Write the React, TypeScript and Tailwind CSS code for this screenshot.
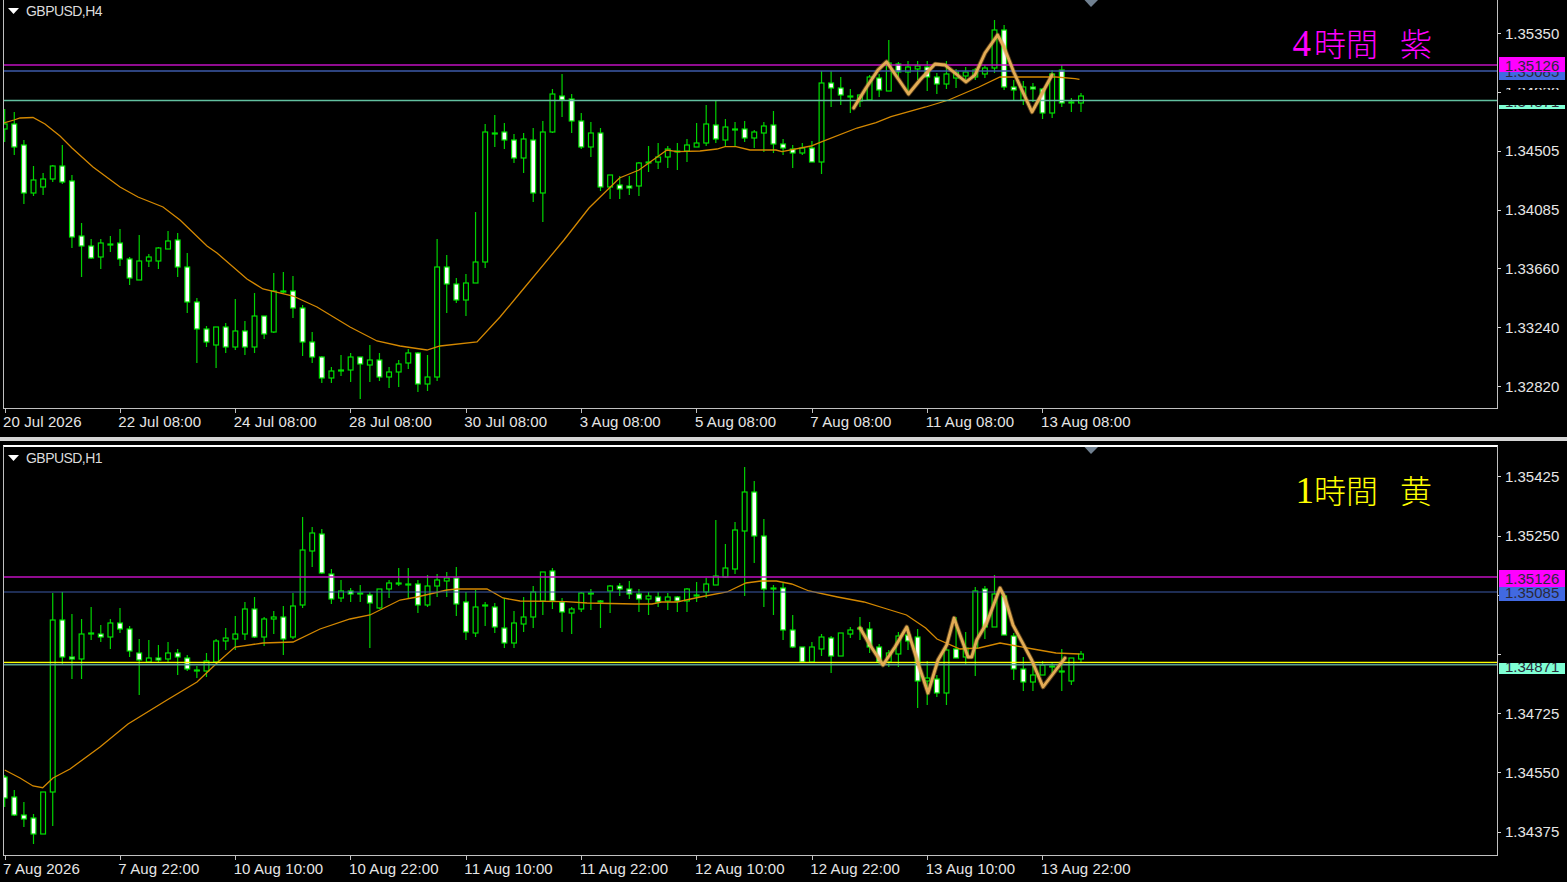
type Candle = [number, number, number, number, number]

const X0 = 4.67
const STEP = 9.61

// hi, body top, body bottom, lo, white body
const h4Candles: Candle[] = [
  [109,124,129,142,0],[112,124,147,155,1],[140,145,193,204,1],[166,180,193,196,0],[173,179,187,195,0],
  [165,166,179,182,0],[145,166,182,184,1],[175,181,237,248,1],[223,236,246,277,1],[239,246,258,259,1],
  [239,243,257,269,0],[236,244,245,252,1],[229,243,259,266,1],[257,259,278,285,1],[235,261,280,280,0],
  [254,257,261,267,0],[247,248,261,269,0],[231,241,249,249,0],[233,240,267,277,1],[253,267,302,313,1],
  [298,302,329,363,1],[326,329,342,347,1],[327,327,345,368,0],[323,327,347,353,1],[299,331,347,350,0],
  [321,331,347,355,1],[293,316,347,353,0],[316,316,334,339,1],[273,291,332,333,0],[272,291,292,293,1],
  [276,291,308,318,1],[305,308,342,356,1],[332,342,357,363,1],[356,357,378,383,1],[367,371,378,383,0],
  [355,370,371,376,1],[353,357,370,382,0],[357,357,364,399,1],[345,360,365,382,0],[353,360,377,381,1],
  [367,372,377,388,0],[360,364,372,387,0],[349,353,363,369,0],[352,353,384,392,1],[355,377,384,391,0],
  [239,267,377,381,0],[255,267,284,313,1],[278,284,300,303,1],[274,283,300,316,0],[212,262,283,283,0],
  [124,132,262,268,0],[115,133,134,147,1],[123,132,140,149,1],[134,140,158,163,1],[133,139,158,173,0],
  [128,140,193,202,1],[121,132,193,222,0],[89,94,132,133,0],[74,96,100,117,1],[94,99,121,133,1],
  [113,121,147,149,1],[122,133,147,157,0],[128,133,187,191,1],[175,175,187,199,0],[176,185,189,199,1],
  [176,186,188,195,1],[162,163,186,196,0],[146,162,163,172,1],[143,157,162,169,0],[146,149,157,168,0],
  [143,151,152,170,1],[139,145,151,162,0],[123,143,147,147,0],[105,124,143,146,0],[101,125,139,143,1],
  [119,127,140,146,0],[122,129,130,146,1],[121,129,138,142,1],[130,132,138,148,0],[122,126,133,152,0],
  [111,125,144,153,1],[139,144,148,155,1],[145,149,153,168,1],[143,148,153,155,0],[141,148,162,162,1],
  [71,83,162,174,0],[71,83,88,107,1],[77,88,95,105,1],[89,96,97,113,1],[95,95,101,107,0],
  [75,77,100,101,0],[74,78,90,97,1],[40,63,91,91,0],[62,64,72,77,1],[61,67,72,95,0],
  [61,66,69,80,0],[61,67,77,91,1],[73,77,84,94,1],[61,74,84,89,0],[69,72,78,88,0],
  [67,72,76,82,0],[68,70,77,80,0],[65,68,74,78,0],[20,30,68,73,0],[25,30,87,90,1],
  [80,87,90,100,1],[81,87,100,105,0],[83,87,89,102,1],[88,89,113,119,1],[70,74,113,118,0],
  [65,70,103,107,1],[98,102,103,112,1],[93,96,103,112,0],
]

const h1Candles: Candle[] = [
  [775,777,798,807,1],[790,797,815,816,1],[802,815,819,827,1],[814,818,834,844,1],[792,792,834,834,0],
  [593,620,792,826,0],[592,620,657,665,1],[614,657,659,679,1],[619,634,659,679,0],[607,633,634,640,1],
  [625,634,637,642,1],[619,623,637,649,0],[608,623,629,633,1],[626,629,651,657,1],[639,653,660,695,1],
  [640,658,662,662,0],[645,658,660,662,1],[642,653,659,662,0],[649,653,657,675,1],[655,658,669,671,1],
  [666,670,671,678,1],[653,661,671,677,0],[639,641,662,663,0],[628,638,641,650,0],[616,634,639,650,0],
  [602,609,634,640,0],[597,609,637,638,1],[617,619,637,646,0],[611,617,619,634,0],[606,617,639,655,1],
  [593,606,637,639,0],[517,550,605,608,0],[527,533,551,567,0],[529,534,573,574,1],[569,574,599,604,1],
  [580,591,598,602,0],[588,591,594,602,1],[585,593,594,602,1],[592,595,603,648,1],[589,589,608,609,0],
  [580,583,589,598,0],[568,583,584,586,1],[568,584,585,598,1],[580,584,605,613,1],[575,586,605,607,0],
  [574,580,586,597,0],[572,578,581,597,0],[567,578,604,616,1],[592,602,632,640,1],[590,607,633,637,0],
  [602,605,606,626,1],[603,607,627,633,1],[598,628,643,648,1],[611,623,643,648,0],[597,617,624,632,0],
  [586,592,617,628,0],[572,572,601,615,0],[568,571,601,609,1],[598,602,612,632,1],[607,609,613,634,0],
  [592,593,609,612,0],[589,593,594,610,1],[600,601,602,628,1],[585,586,591,613,0],[583,586,589,596,1],
  [581,589,594,599,1],[589,594,599,612,1],[592,596,599,615,0],[592,597,602,607,1],[593,597,601,610,0],
  [596,597,601,612,1],[588,589,601,612,0],[582,595,596,602,1],[578,584,592,598,0],[520,576,585,585,0],
  [544,568,577,578,0],[522,530,569,574,0],[467,492,531,596,0],[481,492,536,563,1],[519,536,589,607,1],
  [585,588,589,615,1],[583,588,630,640,1],[615,630,647,648,1],[647,647,662,662,1],[642,647,662,662,0],
  [634,637,649,656,0],[636,638,656,673,1],[633,633,656,656,0],[627,630,634,638,0],[617,628,629,640,1],
  [622,629,647,653,1],[644,647,662,665,1],[650,653,662,667,0],[632,636,654,667,0],[627,635,641,650,1],
  [629,637,681,708,1],[661,678,681,705,0],[675,679,693,697,1],[645,650,693,705,0],[617,649,658,658,1],
  [632,648,657,664,0],[587,591,648,676,0],[586,589,627,639,1],[575,594,627,627,0],[593,596,635,635,1],
  [633,636,669,680,1],[657,669,682,691,1],[663,675,682,691,0],[661,665,675,675,0],[663,666,667,673,1],
  [649,671,672,691,1],[658,658,681,685,0],[651,654,659,662,0],
]

const h4Ma = '4,123 14,120 20,118 33,117.5 45,124 60,136 72,148 93,167 120,187 138,197 163,207 180,220 207,246 217,253 247,279 263,289 293,296 317,307 350,327 377,341 400,346 427,350 440,346 477,342 500,317 520,293 564,240 589,208 619.5,178 639,170 667,150 677,151.7 700,151 717,149 725,146.7 736,146.7 750,150 776,150 782,151.7 811,146 822,141.7 857,128 876,122.7 891,116.7 925.7,107 948.6,100 979,87 1000,77 1036.6,77 1056,77 1075,78.7 1079.5,79.3'
const h1Ma = '4.7,770 20,778 33,786 42.7,787.7 53,778 70,769 100,747 128,724 167,700 197,682 217,663 235,647 263,643 293,642 320,629 350,619 370,615 400,600 417,597 447,590 457,589 487,589 503,598 520,601 566,601.7 587,603 635,604 652,604 661.6,602 677,602 700,597 727,592 746,583 761,581 776.4,581 791.7,584 809,591 837.6,597 864,602 887,609 906.5,615 925.7,628 937,639 960,649 979,648 1000,643 1033,649 1056,653 1079.5,654'
const h4Trend = '853.7,108 866,88 878,70 886.6,61.7 899,80 908.5,94 920,80 935,64 945,65 966,82 975,75 985,53 997.6,35 1004,47 1013.7,72 1032,112 1052,75'
const h1Trend = '860,628 870,645 883,665 895,647 906.7,627 918,663 928,693 938,660 946.7,645 954,618 968,657 971.7,657 976.7,640 986.7,623 1000,588 1005,598 1013,625 1031.7,660 1043,687 1065,658'

interface HLine {
  y: number
  color: string
  width: number
}

const h4Lines: HLine[] = [
  { y: 65, color: '#c010c0', width: 1.5 },
  { y: 71, color: '#3c5aa8', width: 1.5 },
  { y: 100.6, color: '#62c0a0', width: 1.5 },
]

const h1Lines: HLine[] = [
  { y: 577, color: '#c010c0', width: 1.3 },
  { y: 592, color: '#3c5aa8', width: 1.1 },
  { y: 664.7, color: '#5aa090', width: 1.8 },
  { y: 662.4, color: '#ffff00', width: 1.3 },
]

function Candles({ data }: { data: Candle[] }) {
  return (
    <g>
      {data.map(([hi, top, bot, lo, white], i) => {
        const x = X0 + STEP * i
        return (
          <g key={i}>
            <line x1={x} x2={x} y1={hi} y2={lo} stroke="#00d200" strokeWidth={1.2} />
            <rect
              x={x - 2.4}
              y={top}
              width={4.8}
              height={Math.max(bot - top, 1)}
              fill={white ? '#ffffff' : '#000000'}
              stroke="#00e000"
              strokeWidth={1.2}
            />
          </g>
        )
      })}
    </g>
  )
}

interface ChartProps {
  top: number
  data: Candle[]
  ma: string
  trend: string
  lines: HLine[]
}

function Chart({ top, data, ma, trend, lines }: ChartProps) {
  return (
    <svg viewBox={`4 ${top} 1493 408`} className="block h-[408px] w-[1493px]">
      <Candles data={data} />
      <polyline points={ma} fill="none" stroke="#d48800" strokeWidth={1.3} />
      {lines.map((l) => (
        <line key={l.y} x1={4} x2={1497} y1={l.y} y2={l.y} stroke={l.color} strokeWidth={l.width} />
      ))}
      <polyline points={trend} fill="none" stroke="#c98f3a" strokeOpacity={0.45} strokeWidth={4.6} strokeLinejoin="round" strokeLinecap="round" />
      <polyline points={trend} fill="none" stroke="#e3ac55" strokeWidth={2.8} strokeLinejoin="round" strokeLinecap="round" />
      <polygon points={`1084.5,${top} 1098,${top} 1091,${top + 7}`} fill="#708090" />
    </svg>
  )
}

interface Tag {
  price: string
  bg: string
  color: string
  top: number
  height: number
  textOffset: number
}

interface PriceAxisProps {
  className: string
  rowClass: string
  prices: (string | null)[]
  tags: Tag[]
}

function PriceAxis({ className, rowClass, prices, tags }: PriceAxisProps) {
  return (
    <div className={`relative h-[409px] w-[69px] text-[15px] leading-[16px] text-[#e6e6e6] ${className}`}>
      {prices.map((p, i) => (
        <div key={i} className={`flex items-center ${rowClass}`}>
          <span className="h-px w-[3px] bg-[#d8d8d8]" />
          {p && <span className="ml-[4px]">{p}</span>}
        </div>
      ))}
      {tags.map((t) => (
        <div
          key={t.top}
          className="absolute left-px w-[66px] overflow-hidden pl-[6px]"
          style={{ top: t.top, height: t.height, background: t.bg, color: t.color }}
        >
          <div style={{ marginTop: t.textOffset }}>{t.price}</div>
        </div>
      ))}
    </div>
  )
}

function TimeAxis({ labels }: { labels: string[] }) {
  return (
    <div className="ml-[3px] flex text-[15px] leading-[16px] tracking-[0.1px] text-[#e6e6e6]">
      {labels.map((t) => (
        <div key={t} className="w-[115.33px] shrink-0">
          <div className="ml-[1.5px] h-[4px] w-px bg-[#c0c0c0]" />
          <div className="mt-px whitespace-nowrap">{t}</div>
        </div>
      ))}
    </div>
  )
}

function ChartLabel({ symbol }: { symbol: string }) {
  return (
    <div className="absolute left-[4px] top-[3px] flex items-center text-[14px] leading-[16px] tracking-[-0.55px] text-[#dcdcdc]">
      <svg width="11" height="6" viewBox="0 0 11 6" className="mr-[7px]">
        <polygon points="0,0 11,0 5.5,6" fill="#ffffff" />
      </svg>
      {symbol}
    </div>
  )
}

interface CaptionProps {
  digit: string
  digitClass: string
  first: string
  second: string
  color: string
}

function Caption({ digit, digitClass, first, second, color }: CaptionProps) {
  return (
    <div
      className={`absolute right-[65px] top-[22px] whitespace-nowrap font-['Liberation_Serif','Noto_Sans_CJK_JP',serif] text-[32px] font-light leading-[46px] ${color}`}
    >
      <span className={`text-[37px] leading-none ${digitClass}`}>{digit}</span>
      {first}
      <span className="ml-[22px]">{second}</span>
    </div>
  )
}

export default function App() {
  return (
    <div className="flex h-[882px] w-[1567px] flex-col overflow-hidden bg-black font-['Liberation_Sans',sans-serif]">
      {/* H4 */}
      <div className="h-[437px]">
        <div className="flex">
          <div className="relative ml-[3px] w-[1495px] border-x border-b border-[#c0c0c0]">
            <Chart top={0} data={h4Candles} ma={h4Ma} trend={h4Trend} lines={h4Lines} />
            <ChartLabel symbol="GBPUSD,H4" />
            <Caption digit="4" digitClass="mr-[3px]" first="時間" second="紫" color="text-[#ff00ff]" />
          </div>
          <PriceAxis
            className="pt-[4.4px]"
            rowClass="h-[58.8px]"
            prices={['1.35350', null, '1.34505', '1.34085', '1.33660', '1.33240', '1.32820']}
            tags={[
              { price: '1.35085', bg: '#4169e1', color: '#2a2a3a', top: 72, height: 8, textOffset: -8 },
              { price: '1.35126', bg: '#ff00ff', color: '#2a2a3a', top: 57, height: 15, textOffset: 1 },
              { price: '1.34930', bg: '#000000', color: '#e6e6e6', top: 88, height: 2, textOffset: -4 },
              { price: '1.34871', bg: '#7fffd4', color: '#2a2a3a', top: 105, height: 4, textOffset: -11 },
            ]}
          />
        </div>
        <TimeAxis
          labels={[
            '20 Jul 2026',
            '22 Jul 08:00',
            '24 Jul 08:00',
            '28 Jul 08:00',
            '30 Jul 08:00',
            '3 Aug 08:00',
            '5 Aug 08:00',
            '7 Aug 08:00',
            '11 Aug 08:00',
            '13 Aug 08:00',
          ]}
        />
      </div>

      <div className="h-[4px] bg-[#d4d4d4]" />

      {/* H1 */}
      <div className="flex-1 pt-[4px]">
        <div className="flex">
          <div className="relative ml-[3px] w-[1495px] border-x border-b border-t-2 border-[#c0c0c0] border-t-white">
            <Chart top={447} data={h1Candles} ma={h1Ma} trend={h1Trend} lines={h1Lines} />
            <ChartLabel symbol="GBPUSD,H1" />
            <Caption digit="1" digitClass="mr-0" first="時間" second="黄" color="text-[#ffff00]" />
          </div>
          <PriceAxis
            className="pt-[2.4px]"
            rowClass="h-[59.2px]"
            prices={['1.35425', '1.35250', null, null, '1.34725', '1.34550', '1.34375']}
            tags={[
              { price: '1.35085', bg: '#4169e1', color: '#2a2a3a', top: 142, height: 14, textOffset: -2 },
              { price: '1.35126', bg: '#ff00ff', color: '#2a2a3a', top: 125, height: 17, textOffset: 1 },
              { price: '1.34871', bg: '#7fffd4', color: '#2a2a3a', top: 218, height: 11, textOffset: -4 },
            ]}
          />
        </div>
        <TimeAxis
          labels={[
            '7 Aug 2026',
            '7 Aug 22:00',
            '10 Aug 10:00',
            '10 Aug 22:00',
            '11 Aug 10:00',
            '11 Aug 22:00',
            '12 Aug 10:00',
            '12 Aug 22:00',
            '13 Aug 10:00',
            '13 Aug 22:00',
          ]}
        />
      </div>
    </div>
  )
}
